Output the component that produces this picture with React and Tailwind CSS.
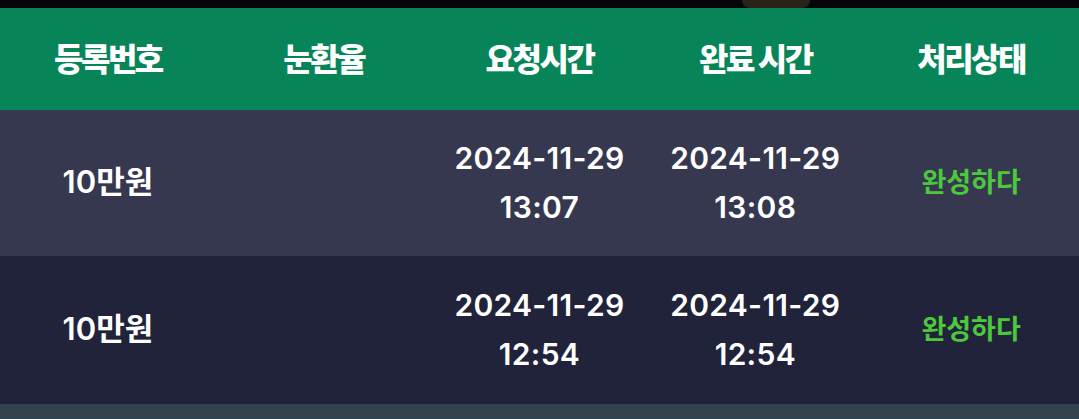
const rows = [
  { amount: '10만원', rate: '', reqDate: '2024-11-29', reqTime: '13:07', doneDate: '2024-11-29', doneTime: '13:08', status: '완성하다', bg: 'bg-[#36384f]' },
  { amount: '10만원', rate: '', reqDate: '2024-11-29', reqTime: '12:54', doneDate: '2024-11-29', doneTime: '12:54', status: '완성하다', bg: 'bg-[#21233a]' },
]

const headers = ['등록번호', '눈환율', '요청시간', '완료 시간', '처리상태']

const fontCls = "font-['Inter','Noto_Sans_CJK_KR',sans-serif]"

export default function App() {
  return (
    <div className={`flex h-[419px] w-[1079px] flex-col overflow-hidden bg-[#21233a] ${fontCls}`}>
      {/* 상단 바 */}
      <div className="flex h-[8px] shrink-0 bg-[#05050a]">
        <div className="ml-[742px] h-full w-[68px] rounded-b-[10px] bg-[#2a2418]" />
      </div>

      {/* 헤더 */}
      <div className="grid h-[102px] shrink-0 grid-cols-5 items-center bg-[#078558] pb-[5px] text-white">
        {headers.map((h) => (
          <div key={h} className="text-center font-['Noto_Sans_CJK_KR',sans-serif] text-[32px] font-black tracking-[-2.5px]">
            {h}
          </div>
        ))}
      </div>

      {rows.map((r, i) => (
        <div key={i} className={`grid ${i === 0 ? 'h-[146px]' : 'h-[148px]'} shrink-0 grid-cols-5 items-center ${r.bg} text-white`}>
          <div className="pb-[2px] text-center text-[31px] font-semibold">{r.amount}</div>
          <div className="text-center text-[28px] font-semibold">{r.rate}</div>
          <div className="text-center text-[30px] font-semibold leading-[49px] tracking-[0.3px]">
            <div>{r.reqDate}</div>
            <div>{r.reqTime}</div>
          </div>
          <div className="text-center text-[30px] font-semibold leading-[49px] tracking-[0.3px]">
            <div>{r.doneDate}</div>
            <div>{r.doneTime}</div>
          </div>
          <div className="pb-[4px] text-center font-['Noto_Sans_CJK_KR',sans-serif] text-[27px] font-bold text-[#4cc83c]">{r.status}</div>
        </div>
      ))}

      <div className="flex-1 bg-[#32424f]" />
    </div>
  )
}
